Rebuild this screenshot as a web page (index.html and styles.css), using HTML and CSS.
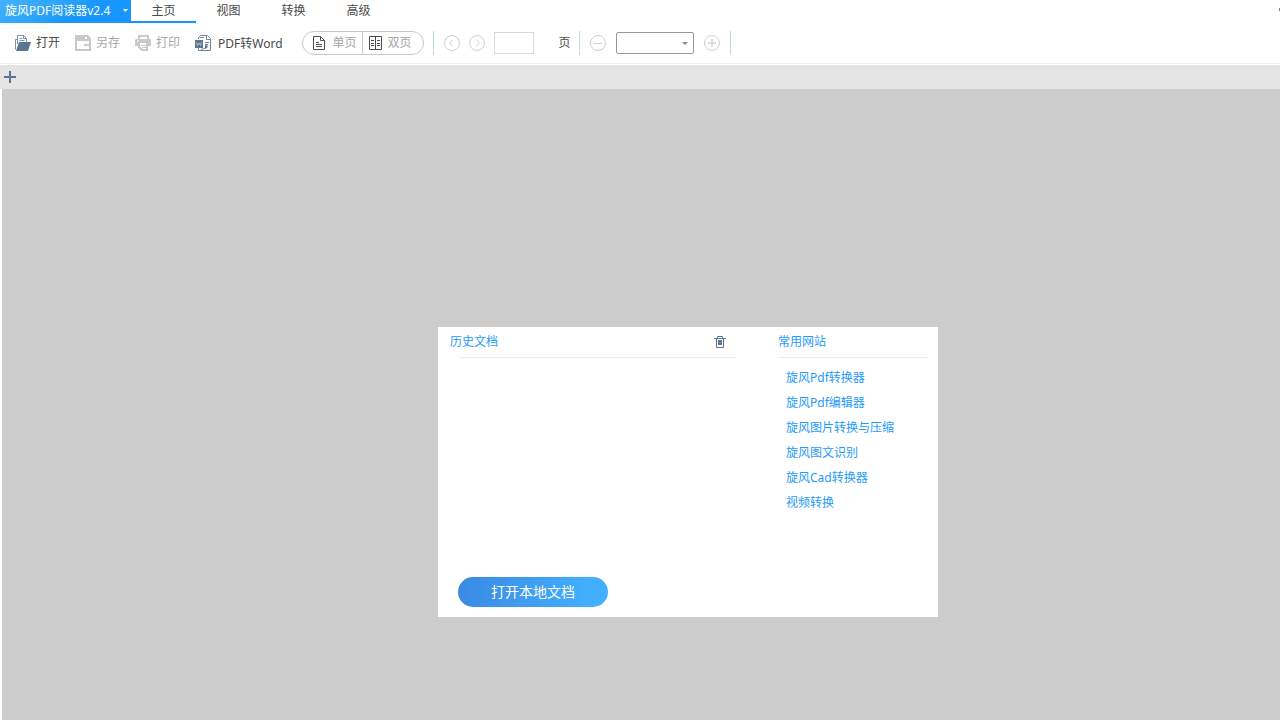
FILE: index.html
```html
<!DOCTYPE html>
<html lang="zh-CN">
<head>
<meta charset="utf-8">
<title>旋风PDF阅读器</title>
<link rel="stylesheet" href="styles.css">
</head>
<body>
<header class="menubar">
  <button class="app-menu" type="button">
    <span>旋风PDF阅读器v2.4</span>
    <svg width="5" height="3" viewBox="0 0 5 3"><path d="M0 0h5L2.5 3z" fill="#fff"/></svg>
  </button>
  <nav class="tabs">
    <button class="tab active" type="button">主页</button>
    <button class="tab" type="button">视图</button>
    <button class="tab" type="button">转换</button>
    <button class="tab" type="button">高级</button>
  </nav>
  <button class="window-edge" type="button" aria-label="窗口菜单"></button>
</header>

<div class="toolbar">
  <div class="file-tools">
    <button class="tool" type="button">
      <svg width="16" height="16" viewBox="0 0 16 16"><path d="M2.500 9V.5h6l3 3V7M.5 14.500V4.500H2M8.500.5v3h3M4.500 3.500h3M4.500 5.500h5" fill="none" stroke="#8093a8"/><path d="M4 7h12l-3 9H1z" fill="#5c7691"/></svg>
      打开</button>
    <button class="tool" type="button" disabled>
      <svg width="16" height="16" viewBox="0 0 16 16"><path d="M0 0h13l3 3v13H0zM10 2v2h2V2zM2 6v8h12V6z" fill="#c9c9c9" fill-rule="evenodd"/><path d="M9 9h5v2H9z" fill="#c9c9c9"/></svg>
      另存</button>
    <button class="tool" type="button" disabled>
      <svg width="16" height="16" viewBox="0 0 16 16"><path d="M4 4V1h9v3" fill="none" stroke="#c9c9c9" stroke-width="2"/><path d="M1 4h14l1 1v6h-3V8H3v3H0V5z" fill="#c9c9c9"/><path d="M2 6h2" stroke="#fff"/><path d="M4 8v4l3 3h5V8" fill="none" stroke="#c9c9c9" stroke-width="2"/><path d="M6 10.500h5M7 12.500h4" stroke="#c9c9c9"/></svg>
      打印</button>
    <button class="tool" type="button">
      <svg width="16" height="16" viewBox="0 0 16 16"><path d="M3.500 4V2.500l2-2h7l3 3v12h-12V13M5 2.500h4M11.500 1v3.500H15M10 7.500h4M10 9.500h3M6 14.500l6-2v-2" fill="none" stroke="#6f859e"/><path d="M0 5h8v8H0z" fill="#5c7691"/><path d="M1.500 7.500l1 3L4 8l1.500 2.500 1-3" fill="none" stroke="#c5d0dc" stroke-width=".8"/><path d="M10 10l3 1-3 3z" fill="#5c7691"/></svg>
      <span class="word-label">PDF转Word</span></button>
  </div>

  <div class="page-mode">
    <button class="mode" type="button">
      <svg width="14" height="14" viewBox="0 0 14 14"><path d="M1.500.5h7l4 4v9h-11zM8.500.5v4h4" fill="none" stroke="#4c4c4c"/><path d="M4 6.500h3M4 8.500h6M4 10.500h6" stroke="#4c4c4c"/></svg>
      单页</button>
    <button class="mode" type="button">
      <svg width="14" height="14" viewBox="0 0 14 14"><path d="M.5.5h12v13H.5zM6.500.5v13M2 4.500h3M2 7.500h3M2 9.500h3M8 4.500h3M8 7.500h3M8 9.500h3" fill="none" stroke="#4c4c4c"/></svg>
      双页</button>
  </div>

  <div class="pager">
    <button class="round" type="button" aria-label="上一页"><svg width="16" height="16" viewBox="0 0 16 16"><circle cx="8" cy="8" r="7.500"/><path d="M9 4.500L5.500 8 9 11.500"/></svg></button>
    <button class="round" type="button" aria-label="下一页"><svg width="16" height="16" viewBox="0 0 16 16"><circle cx="8" cy="8" r="7.500"/><path d="M7 4.500L10.500 8 7 11.500"/></svg></button>
    <input class="page-input" id="page" type="text">
    <label class="page-label" for="page">页</label>
  </div>

  <div class="zoomer">
    <button class="round" type="button" aria-label="缩小"><svg width="16" height="16" viewBox="0 0 16 16"><circle cx="8" cy="8" r="7.500"/><path d="M4 8.500h8"/></svg></button>
    <span class="zoom-box">
      <select class="zoom-select" aria-label="缩放比例"><option></option></select>
      <svg class="zoom-arrow" width="6" height="3" viewBox="0 0 6 3"><path d="M0 0h6L3 3z" fill="#8a8a8a"/></svg>
    </span>
    <button class="round" type="button" aria-label="放大"><svg width="16" height="16" viewBox="0 0 16 16"><circle cx="8" cy="8" r="7.500"/><path d="M4 8h8M8 4v8" stroke-width="2" opacity=".7"/></svg></button>
  </div>
</div>

<div class="doc-tabs">
  <button class="new-tab" type="button" aria-label="新建标签"><svg width="12" height="12" viewBox="0 0 12 12"><path d="M0 6h12M6 0v12" stroke="#5c7691" stroke-width="2"/></svg></button>
</div>

<main class="workspace">
  <div class="start-panel">
    <section class="history">
      <div class="history-head">
        <h2 class="heading">历史文档</h2>
        <button class="clear" type="button" aria-label="清空历史"><svg width="12" height="12" viewBox="0 0 12 12"><path d="M0 2.500h12M3.500 2V.5h5V2M2.500 3v8.500h7V3" fill="none" stroke="#5c7691"/><path d="M4 4h4v5H4z" fill="#5c7691"/></svg></button>
      </div>
      <button class="open-local" type="button">打开本地文档</button>
    </section>
    <section class="sites">
      <h2 class="heading sites-head">常用网站</h2>
      <ul class="site-list">
        <li><a href="#">旋风Pdf转换器</a></li>
        <li><a href="#">旋风Pdf编辑器</a></li>
        <li><a href="#">旋风图片转换与压缩</a></li>
        <li><a href="#">旋风图文识别</a></li>
        <li><a href="#">旋风Cad转换器</a></li>
        <li><a href="#">视频转换</a></li>
      </ul>
    </section>
  </div>
</main>
</body>
</html>
```
FILE: styles.css
```css
* { box-sizing: border-box; }
body {
  margin: 0;
  min-height: 100vh;
  display: flex;
  flex-direction: column;
  background: #fff;
  color: #4a4a4a;
  font: 12px/16px "Noto Sans", "Noto Sans CJK SC", sans-serif;
}
button {
  margin: 0;
  padding: 0;
  border: 0;
  background: none;
  color: inherit;
  font: inherit;
}
svg { display: block; flex: none; }

.menubar { display: flex; height: 23px; }
.app-menu {
  display: flex;
  align-items: center;
  justify-content: space-between;
  width: 131px;
  padding: 0 3px 2px 5px;
  background: linear-gradient(150deg, #43b1fa, #2ba4fb 40%, #1797fd 60%);
  color: #fff;
  white-space: nowrap;
}
.tabs { display: flex; }
.tab { width: 65px; border-bottom: 2px solid transparent; }
.tab.active { border-color: #1296fb; }
.window-edge {
  width: 1px;
  height: 3px;
  margin: 8px 0 0 auto;
  background: #7189a3;
}

.toolbar {
  display: flex;
  align-items: center;
  height: 41px;
  padding-left: 15px;
  border-bottom: 1px solid #ececec;
}
.file-tools { display: flex; gap: 15px; }
.tool { display: flex; align-items: center; gap: 5px; white-space: nowrap; }
.tool:disabled { color: #a9a6aa; }
.word-label { padding: 2px 0 0 2px; }

.page-mode {
  display: flex;
  height: 24px;
  margin-left: 19px;
  border: 1px solid #c8c8c8;
  border-radius: 12px;
}
.mode {
  display: flex;
  align-items: center;
  gap: 7px;
  width: 59px;
  padding-left: 9px;
  color: #a9a6aa;
}
.mode + .mode {
  gap: 5px;
  width: 61px;
  padding-left: 6px;
  border-left: 1px solid #c8c8c8;
}

.pager, .zoomer {
  display: flex;
  align-items: center;
  height: 24px;
  border-right: 1px solid #b9dfd3;
}
.pager {
  gap: 9px;
  margin-left: 9px;
  padding: 0 8px 0 10px;
  border-left: 1px solid #b9dfd3;
}
.round svg { fill: none; stroke: #cfcfcf; }
.page-input {
  width: 40px;
  height: 22px;
  padding: 0 4px;
  border: 1px solid #d8d8d8;
  font: inherit;
}
.page-label { padding-left: 16px; }
.zoomer { gap: 10px; padding: 0 10px; }
.zoom-box { position: relative; }
.zoom-select {
  display: block;
  width: 78px;
  height: 22px;
  border: 1px solid #999;
  border-radius: 2px;
  background: #fff;
  appearance: none;
  font: inherit;
}
.zoom-arrow { position: absolute; top: 10px; right: 6px; pointer-events: none; }

.doc-tabs {
  display: flex;
  align-items: center;
  height: 24px;
  margin-top: 1px;
  padding-left: 4px;
  background: #e4e4e4;
}
.workspace {
  flex: 1;
  margin-left: 2px;
  padding: 238px 0 0 436px;
  background: #cdcdcd;
}
.start-panel {
  display: flex;
  width: 500px;
  min-height: 290px;
  padding: 0 10px;
  background: #fff;
  color: #1e9bfb;
}
.heading { margin: 0; font-size: 12px; font-weight: 400; line-height: 30px; }
.history {
  display: flex;
  flex-direction: column;
  flex: 1;
  padding-left: 2px;
}
.history-head {
  display: flex;
  align-items: center;
  justify-content: space-between;
  padding: 0 10px 1px 0;
  background: linear-gradient(#ebebeb, #ebebeb) 10px 100% / 100% 1px no-repeat;
}
.open-local {
  align-self: flex-start;
  width: 150px;
  height: 30px;
  margin: auto 0 10px 8px;
  border-radius: 15px;
  background: linear-gradient(100deg, #3b89e2, #42b0ff 90%);
  color: #fff;
  font-size: 14px;
}
.sites { width: 150px; margin-left: 42px; }
.sites-head { border-bottom: 1px solid #ebebeb; }
.site-list { margin: 0; padding: 7px 0 0 8px; list-style: none; line-height: 25px; }
.site-list a { color: inherit; text-decoration: none; }
```
